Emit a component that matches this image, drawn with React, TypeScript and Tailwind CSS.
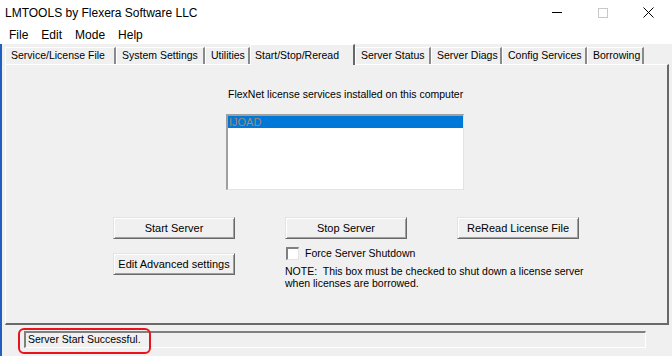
import React from 'react'

const font = { fontFamily: '"Liberation Sans", Arial, sans-serif' }

const tabs: { label: string; w: string }[] = [
  { label: 'Service/License File', w: 'w-[111px]' },
  { label: 'System Settings', w: 'w-[89px]' },
  { label: 'Utilities', w: 'w-[45px]' },
  { label: 'Start/Stop/Reread', w: 'w-[105px]' },
  { label: 'Server Status', w: 'w-[76px]' },
  { label: 'Server Diags', w: 'w-[71px]' },
  { label: 'Config Services', w: 'w-[85px]' },
  { label: 'Borrowing', w: 'w-[57px]' },
]

const Button = ({ label }: { label: string }) => (
  <div className="w-[122px] h-[22px] flex items-center justify-center bg-[#f0f0f0] border border-t-[#e3e3e3] border-l-[#e3e3e3] border-r-[#696969] border-b-[#696969] shadow-[inset_1px_1px_0_#ffffff,inset_-1px_-1px_0_#a0a0a0] text-[11px] text-black whitespace-nowrap">
    {label}
  </div>
)

const App: React.FunctionComponent = () => {
  return (
    <div className="w-[672px] h-[356px] bg-[#f0f0f0] flex flex-col overflow-hidden text-black" style={font}>
      {/* title bar */}
      <div className="h-[25px] bg-white flex items-center justify-between">
        <span className="pl-[5px] text-[12px]">LMTOOLS by Flexera Software LLC</span>
        <div className="flex items-center h-full">
          <div className="w-[46px] flex justify-center">
            <div className="w-[10px] h-px bg-black" />
          </div>
          <div className="w-[46px] flex justify-center">
            <div className="w-[10px] h-[10px] border border-[#c8c8c8]" />
          </div>
          <div className="w-[46px] flex justify-center pr-[2px]">
            <svg width="11" height="11" viewBox="0 0 11 11">
              <path d="M0.5 0.5 L10.5 10.5 M10.5 0.5 L0.5 10.5" stroke="#000" strokeWidth="1" />
            </svg>
          </div>
        </div>
      </div>
      {/* menu bar */}
      <div className="h-[19px] bg-white flex items-center text-[12px] pl-[9px] gap-[13px]">
        <span>File</span>
        <span>Edit</span>
        <span>Mode</span>
        <span>Help</span>
      </div>
      {/* body */}
      <div className="flex-1 flex flex-col border-l-2 border-[#1e5fbf]">
        <div className="flex items-end h-[20px] pl-[3px] relative z-10">
          {tabs.map((t) => {
            const active = t.label === 'Start/Stop/Reread'
            return active ? (
              <div
                key={t.label}
                className={`${t.w} h-[21px] -mb-px pl-[4px] flex items-start pt-[3px] bg-[#f0f0f0] border-t border-l border-white border-r-2 border-r-[#696969] text-[10.5px] whitespace-nowrap`}
              >
                {t.label}
              </div>
            ) : (
              <div
                key={t.label}
                className={`${t.w} h-[17px] pl-[5px] flex items-center bg-[#f0f0f0] border-t border-l border-white border-r-2 border-r-[#8a8a8a] text-[10.5px] whitespace-nowrap`}
              >
                {t.label}
              </div>
            )
          })}
        </div>
        <div className="ml-[3px] w-[664px] h-[261px] border-t border-l border-white border-r-2 border-b-2 border-r-[#696969] border-b-[#696969] flex flex-col text-[10.5px]">
          <div className="mt-[22px] pl-[222px] whitespace-nowrap">FlexNet license services installed on this computer</div>
          <div className="mt-[11px] ml-[220px] w-[238px] h-[76px] bg-white border-t-2 border-l-2 border-[#a0a0a0] border-r border-b border-r-[#e3e3e3] border-b-[#e3e3e3]">
            <div className="h-[12px] bg-[#0078d7] text-[#a08a78] text-[11px] leading-[12px] pl-[1px]">IJOAD</div>
          </div>
          <div className="mt-[27px] ml-[107px] grid grid-cols-[122px_122px_122px] gap-x-[50px]">
            <Button label="Start Server" />
            <Button label="Stop Server" />
            <Button label="ReRead License File" />
            <div className="mt-[14px]">
              <Button label="Edit Advanced settings" />
            </div>
            <div className="col-span-2">
              <div className="mt-[7px] ml-[1px] flex items-center gap-[6px]">
                <div className="w-[13px] h-[13px] bg-white border-t-2 border-l-2 border-[#808080] border-r border-b border-r-[#e3e3e3] border-b-[#e3e3e3]" />
                <span>Force Server Shutdown</span>
              </div>
              <div className="mt-[3px] leading-[12px] whitespace-nowrap">
                NOTE:&nbsp; This box must be checked to shut down a license server
                <br />
                when licenses are borrowed.
              </div>
            </div>
          </div>
        </div>
        {/* status bar */}
        <div className="flex-1 relative flex items-center pl-[22px]">
          <div className="w-[622px] h-[17px] border-t-2 border-l-2 border-[#808080] border-r border-b border-r-white border-b-white flex items-center pl-[2px] text-[10.5px] mb-[3px]">
            Server Start Successful.
          </div>
          <div className="absolute left-[16px] top-[3px] w-[133px] h-[26px] rounded-[6px] border-2 border-[#e8141b]" />
        </div>
      </div>
    </div>
  )
}

export default App
